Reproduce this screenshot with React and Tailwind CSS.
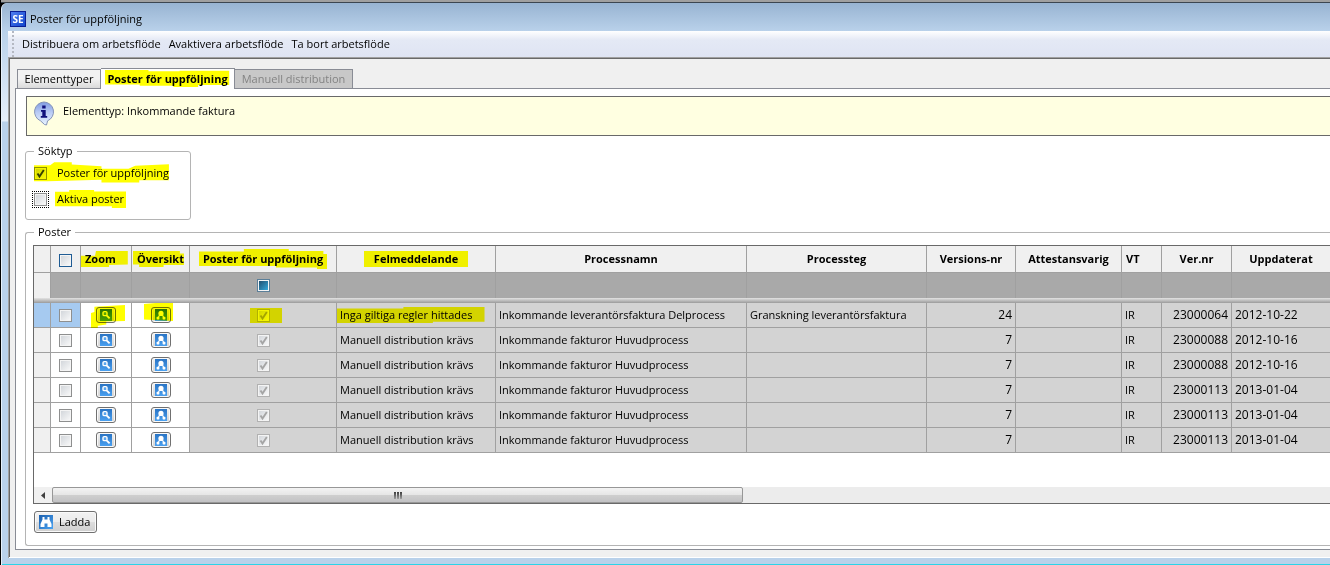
import React, { useState } from 'react';
import clsx from 'clsx';

const MENU = ['Distribuera om arbetsflöde', 'Avaktivera arbetsflöde', 'Ta bort arbetsflöde'];

const COLUMNS = [
  { key: 'head', width: 'w-[17px]' },
  { key: 'select', width: 'w-[30px]' },
  { key: 'zoom', label: 'Zoom', width: 'w-[51px]', align: 'text-left pl-1', mark: '-left-1 -right-3 inset-y-0', shape: '0,30 30,30 32,0 100,0 100,85 60,88 60,100 0,100' },
  { key: 'overview', label: 'Översikt', width: 'w-[58px]', align: 'text-center', mark: '-left-1 right-0 inset-y-0', shape: '0,0 92,0 92,15 100,15 100,88 60,88 60,100 12,100 12,85 0,85' },
  { key: 'followUp', label: 'Poster för uppföljning', width: 'w-[147px]', align: 'text-center', mark: '-inset-x-1 -inset-y-0.5', shape: '0,12 35,12 35,0 70,0 70,10 97,10 97,25 100,25 100,100 92,100 92,92 60,92 60,85 0,85' },
  { key: 'error', label: 'Felmeddelande', width: 'w-[159px]', align: 'text-center', mark: '-inset-x-2.5 inset-y-0', shape: '0,0 100,0 100,100 0,100' },
  { key: 'process', label: 'Processnamn', width: 'w-[251px]', align: 'text-center' },
  { key: 'step', label: 'Processteg', width: 'w-[180px]', align: 'text-center' },
  { key: 'version', label: 'Versions-nr', width: 'w-[89px]', align: 'text-center' },
  { key: 'attest', label: 'Attestansvarig', width: 'w-[106px]', align: 'text-center' },
  { key: 'vt', label: 'VT', width: 'w-[40px]', align: 'text-left pl-1' },
  { key: 'verNo', label: 'Ver.nr', width: 'w-[70px]', align: 'text-center' },
  { key: 'updated', label: 'Uppdaterat', width: 'w-[99px]', align: 'text-center' },
];

const MANUAL = 'Manuell distribution krävs';
const MAIN = 'Inkommande fakturor Huvudprocess';

const ROWS = [
  { error: 'Inga giltiga regler hittades', process: 'Inkommande leverantörsfaktura Delprocess', step: 'Granskning leverantörsfaktura', version: 24, verNo: '23000064', updated: '2012-10-22' },
  { error: MANUAL, process: MAIN, step: '', version: 7, verNo: '23000088', updated: '2012-10-16' },
  { error: MANUAL, process: MAIN, step: '', version: 7, verNo: '23000088', updated: '2012-10-16' },
  { error: MANUAL, process: MAIN, step: '', version: 7, verNo: '23000113', updated: '2013-01-04' },
  { error: MANUAL, process: MAIN, step: '', version: 7, verNo: '23000113', updated: '2013-01-04' },
  { error: MANUAL, process: MAIN, step: '', version: 7, verNo: '23000113', updated: '2013-01-04' },
];

// Highlighter pen stroke over its relative parent
function Marker({ className, shape = '0,0 100,0 100,100 0,100' }) {
  return (
    <span className={clsx('absolute pointer-events-none mix-blend-multiply', className)}>
      <svg viewBox="0 0 100 100" preserveAspectRatio="none" className="block w-full h-full">
        <polygon points={shape} fill="#ffff00" />
      </svg>
    </span>
  );
}

function CheckBox({ id, label, checked, onChange, disabled, tone = 'border-[#8e8f8f]' }) {
  return (
    <span className="relative inline-block w-[13px] h-[13px] align-middle">
      <input
        id={id}
        type="checkbox"
        aria-label={label}
        checked={checked}
        onChange={onChange}
        disabled={disabled}
        className={clsx(
          'block appearance-none w-[13px] h-[13px] border bg-linear-to-br from-[#cfd3d8] to-[#fbfbfb] shadow-[inset_0_0_0_1px_#f4f4f4]',
          tone
        )}
      />
      {checked && (
        <svg viewBox="0 0 13 13" className="absolute inset-0 w-[13px] h-[13px] pointer-events-none">
          <path d="M3.5 6.5 L5.5 9.5 L9.8 3" fill="none" stroke={disabled ? '#a5a5a5' : '#34406a'} strokeWidth="1.9" />
        </svg>
      )}
    </span>
  );
}

function RowButton({ label, children }) {
  return (
    <button
      type="button"
      aria-label={label}
      className="flex items-center justify-center w-5 h-4 mx-auto rounded-[3px] border border-[#707070] bg-linear-to-b from-[#f2f2f2] to-[#d2d2d2] shadow-[inset_0_0_0_1px_#fafafa]"
    >
      <span className="w-3 h-3 bg-linear-to-b from-[#2a74c4] to-[#4aa0f0]">
        <svg viewBox="0 0 12 12" className="block w-3 h-3">{children}</svg>
      </span>
    </button>
  );
}

const ZoomGlyph = () => (
  <>
    <rect x="3" y="2.6" width="4" height="4" rx="1.2" fill="#5aa5ee" stroke="#fff" strokeWidth="1.4" />
    <path d="M6.8 6.6 L9.6 9.4" stroke="#fff" strokeWidth="1.9" />
  </>
);

const OverviewGlyph = () => (
  <>
    <circle cx="6" cy="4.4" r="2.6" fill="#fff" />
    <path d="M4.6 6 L3 9 M7.4 6 L9 9" stroke="#fff" strokeWidth="1.2" />
    <rect x="1.6" y="7.8" width="2.8" height="2.6" rx="0.6" fill="#fff" />
    <rect x="7.6" y="7.8" width="2.8" height="2.6" rx="0.6" fill="#fff" />
  </>
);

function InfoIcon() {
  return (
    <svg viewBox="0 0 22 25" className="w-[22px] h-[25px] shrink-0">
      <defs>
        <linearGradient id="info" x1="0" y1="0" x2="0" y2="1">
          <stop offset="0" stopColor="#7f9ae0" />
          <stop offset="0.45" stopColor="#b9cbf5" />
          <stop offset="1" stopColor="#e8f4ff" />
        </linearGradient>
      </defs>
      <path d="M11 1 A9.8 9.8 0 0 1 14.6 19.8 L13.5 24 L11.5 23.5 L7.5 19.8 A9.8 9.8 0 0 1 11 1 Z" fill="url(#info)" stroke="#8594b8" />
      <path d="M9.2 4.6 h3.4 v3 h-3.4 z M8 9 h4.7 v6 h1.5 v1.7 H7.8 V15 h1.5 v-4.3 H8 z" fill="#10107c" />
    </svg>
  );
}

function GroupBox({ title, className, children }) {
  return (
    <fieldset className={clsx('min-w-0 border border-[#b4b4b4] rounded-[3px]', className)}>
      <legend className="ml-2 px-1 h-4 leading-4">{title}</legend>
      {children}
    </fieldset>
  );
}

function PosterTable() {
  const [selected, setSelected] = useState([]);
  const toggle = (i) => setSelected(prev => prev.includes(i) ? prev.filter(n => n !== i) : [...prev, i]);

  return (
    <table className="table-fixed w-[1297px] border-separate border-spacing-0">
      <thead>
        <tr className="h-[27px] bg-[#f0f0f0]">
          {COLUMNS.map(col => (
            <th key={col.key} className={clsx('p-0 border-r border-b border-[#a0a0a0] font-bold whitespace-nowrap', col.width, col.align)}>
              {col.key === 'select' && (
                <CheckBox
                  label="Markera alla"
                  tone="border-[#1f5c94]"
                  checked={selected.length === ROWS.length}
                  onChange={e => setSelected(e.target.checked ? ROWS.map((_, i) => i) : [])}
                />
              )}
              {col.label && (
                <span className="relative inline-block leading-4">
                  {col.label}
                  {col.mark && <Marker className={col.mark} shape={col.shape} />}
                </span>
              )}
            </th>
          ))}
        </tr>
        <tr className="h-[25px] bg-[#a9a9a9]">
          {COLUMNS.map(col => (
            <td key={col.key} className={clsx('p-0 border-r border-[#a0a0a0] text-center', col.key === 'head' && 'bg-[#f0f0f0]')}>
              {col.key === 'followUp' && (
                <input
                  type="checkbox"
                  aria-label="Filtrera poster för uppföljning"
                  className="block mx-auto appearance-none w-[13px] h-[13px] border border-[#5b7f99] bg-linear-to-br from-[#1d4766] to-[#35b3e8] shadow-[inset_0_0_0_1px_#f4f4f4]"
                />
              )}
            </td>
          ))}
        </tr>
        <tr className="h-[5px]">
          <td colSpan={COLUMNS.length} className="p-0 bg-linear-to-b from-[#e3e3e3] to-[#9b9b9b]" />
        </tr>
      </thead>
      <tbody>
        {ROWS.map((row, i) => {
          const first = i === 0;
          const cell = 'p-0 border-r border-b border-[#a0a0a0] whitespace-nowrap';
          const grey = 'bg-[#d3d3d3]';
          return (
            <tr key={i} className="h-[25px] leading-4">
              <td className={clsx(cell, first ? 'bg-[#a6caf0]' : 'bg-[#f0f0f0]')} />
              <td className={clsx(cell, 'text-center', first && 'bg-[#a6caf0]')}>
                <span className="flex justify-center">
                  <CheckBox label={`Markera rad ${i + 1}`} checked={selected.includes(i)} onChange={() => toggle(i)} />
                </span>
              </td>
              <td className={cell}>
                <div className="relative">
                  <RowButton label="Zoom"><ZoomGlyph /></RowButton>
                  {first && <Marker className="left-2.5 right-1.5 -top-0.5 h-[23px]" shape="10,8 100,0 100,70 45,72 45,85 20,90 20,100 0,100 0,35 10,30" />}
                </div>
              </td>
              <td className={cell}>
                <div className="relative">
                  <RowButton label="Översikt"><OverviewGlyph /></RowButton>
                  {first && <Marker className="left-3 right-4 -top-1 h-[18px]" shape="0,5 40,0 100,0 100,100 0,92" />}
                </div>
              </td>
              <td className={clsx(cell, grey, 'text-center')}>
                <span className="relative flex justify-center">
                  <CheckBox label="Poster för uppföljning" checked disabled tone="border-[#b1b1b1]" onChange={() => {}} />
                  {first && <Marker className="left-[60px] right-[54px] -inset-y-px" />}
                </span>
              </td>
              <td className={clsx(cell, grey, 'pl-[3px]')}>
                <span className="relative inline-block">
                  {row.error}
                  {first && <Marker className="-left-[3px] -right-3 inset-y-0" shape="0,10 45,10 45,0 100,0 100,92 65,92 65,100 0,100" />}
                </span>
              </td>
              <td className={clsx(cell, grey, 'pl-[3px]')}>{row.process}</td>
              <td className={clsx(cell, grey, 'pl-[3px]')}>{row.step}</td>
              <td className={clsx(cell, grey, 'pr-[3px] text-right text-[12px]')}>{row.version}</td>
              <td className={clsx(cell, grey)} />
              <td className={clsx(cell, grey, 'pl-[3px]')}>IR</td>
              <td className={clsx(cell, grey, 'pr-[3px] text-right text-[12px]')}>{row.verNo}</td>
              <td className={clsx(cell, grey, 'pl-[3px] text-[12px]')}>{row.updated}</td>
            </tr>
          );
        })}
      </tbody>
    </table>
  );
}

export default function App() {
  const [followUp, setFollowUp] = useState(true);
  const [active, setActive] = useState(false);

  return (
    <div className="min-h-screen flex flex-col bg-black pl-px overflow-hidden text-[11px] leading-4 text-black font-['Open_Sans','Segoe_UI',sans-serif]">
      <div className="h-0.5 bg-[#a0a0a0]" />
      <div className="h-px bg-[#3c4650]" />
      <div className="flex-1 flex flex-col rounded-tl-md bg-[#b9d1ea] border-l border-[#e6f0fa]">
        {/* Title bar */}
        <div className="flex items-center gap-1 h-7 pl-2 pt-1 rounded-tl-md bg-linear-to-b from-[#98b4d2] to-[#b9d1ea]">
          <span className="flex items-center justify-center w-4 h-4 border border-[#0a1e96] bg-linear-to-br from-[#4f7df0] to-[#1246cc] text-[10px] leading-none font-bold text-white">SE</span>
          <h1>Poster för uppföljning</h1>
        </div>

        <div className="flex-1 flex">
          <div className="w-1.5 shrink-0 bg-[linear-gradient(to_bottom,#b9d1ea_0px,#e6effa_90px,#b9d1ea_91px)]" />
          <div className="flex-1 min-w-0 flex flex-col">
            {/* Menu bar */}
            <nav className="flex items-center h-[26px] pl-1 bg-linear-to-b from-white from-0% via-[#e4e9f5] via-35% to-[#dfe4f3]">
              <span className="h-full w-0.5 bg-[repeating-linear-gradient(to_bottom,#b4b8c2_0px,#b4b8c2_2px,transparent_2px,transparent_4px)]" />
              <div className="flex gap-2 pl-2">
                {MENU.map(item => <button key={item} type="button">{item}</button>)}
              </div>
            </nav>

            <div className="flex-1 flex flex-col border-l border-[#a0a0a0] border-t">
              <div className="flex-1 flex flex-col border-l border-t border-[#696969] bg-[#f0f0f0] pl-[5px] pt-[9px] pb-[7px]">
                {/* Tabs */}
                <div role="tablist" className="relative flex items-end h-5 pl-0.5">
                  <button type="button" role="tab" aria-selected="false" className="h-[19px] w-[84px] border border-b-0 border-[#898c95] bg-linear-to-b from-[#f2f2f2] from-50% to-[#dadada]">
                    Elementtyper
                  </button>
                  <button type="button" role="tab" aria-selected="true" className="z-10 h-[21px] -mb-px w-[134px] border border-b-0 border-l-0 border-[#898c95] bg-white font-bold whitespace-nowrap">
                    <span className="relative">
                      Poster för uppföljning
                      <Marker className="-inset-x-0.5 -inset-y-px" shape="0,0 35,0 35,8 60,8 60,5 100,5 100,88 75,88 75,100 55,100 55,92 28,92 28,85 0,85" />
                    </span>
                  </button>
                  <button type="button" role="tab" disabled className="h-[19px] w-[118px] border border-b-0 border-l-0 border-[#898c95] bg-[#c8c8c8] text-[#838383]">
                    Manuell distribution
                  </button>
                </div>

                <div className="flex-1 border border-r-0 border-[#898c95] bg-white pl-[9px] pt-[7px] pb-[3px]">
                  <div className="flex gap-2 h-10 ml-px pl-1.5 pt-1 border border-r-0 border-[#696969] bg-[#ffffe1]">
                    <InfoIcon />
                    <p className="pt-0.5">Elementtyp: Inkommande faktura</p>
                  </div>

                  <GroupBox title="Söktyp" className="w-[166px] mt-[7px]">
                    <div className="flex flex-col items-start gap-2.5 pl-2 pt-1.5 pb-3">
                      <div className="relative flex items-center gap-2.5 h-4">
                        <CheckBox id="followUp" checked={followUp} onChange={e => setFollowUp(e.target.checked)} />
                        <label htmlFor="followUp">Poster för uppföljning</label>
                        <Marker className="inset-x-0 -inset-y-1" shape="0,18 12,18 15,5 28,5 28,15 50,22 50,32 70,32 75,20 100,14 100,80 78,80 78,90 50,90 50,78 10,84 0,84" />
                      </div>
                      <div className="flex items-center gap-2.5 h-4">
                        <span className="flex w-[13px] h-[13px] outline-1 outline-offset-1 outline-dotted outline-black">
                          <CheckBox id="active" checked={active} onChange={e => setActive(e.target.checked)} />
                        </span>
                        <span className="relative">
                          <label htmlFor="active">Aktiva poster</label>
                          <Marker className="-inset-x-0.5 -inset-y-px" shape="0,10 20,10 20,0 55,0 55,8 100,8 100,100 80,100 80,90 0,90" />
                        </span>
                      </div>
                    </div>
                  </GroupBox>

                  <GroupBox title="Poster" className="mt-1 border-r-0 rounded-r-none">
                    <div className="pt-[5px] pb-3 pl-[7px]">
                      <div className="border border-r-0 border-[#696969] overflow-hidden">
                        <PosterTable />
                        <div className="flex h-4 mt-[34px] bg-[#ececec]">
                          <button type="button" aria-label="Rulla åt vänster" className="flex items-center justify-center w-[18px] bg-[#f0f0f0]">
                            <svg viewBox="0 0 4 7" className="w-1 h-[7px]"><path d="M4 0 L0 3.5 L4 7 Z" fill="#404040" /></svg>
                          </button>
                          <div className="flex items-center justify-center gap-px w-8/15 border border-[#979797] rounded-[2px] bg-[linear-gradient(to_bottom,#f3f3f3_0%,#e6e6e6_48%,#cfcfcf_50%,#c2c2c4_100%)]">
                            <span className="w-0.5 h-[7px] bg-linear-to-b from-[#3c3c3c] to-[#a0a0a0]" />
                            <span className="w-0.5 h-[7px] bg-linear-to-b from-[#3c3c3c] to-[#a0a0a0]" />
                            <span className="w-0.5 h-[7px] bg-linear-to-b from-[#3c3c3c] to-[#a0a0a0]" />
                          </div>
                        </div>
                      </div>
                      <button type="button" className="flex items-center gap-1.5 h-[22px] mt-[7px] ml-px pl-1 pr-1.5 border border-[#707070] rounded-[3px] bg-[linear-gradient(to_bottom,#f2f2f2_0%,#ebebeb_50%,#dddddd_51%,#cfcfcf_100%)] shadow-[inset_0_0_0_1px_#fafafa]">
                        <span className="bg-linear-to-br from-[#1b5fae] to-[#4aa3f2]">
                          <svg viewBox="0 0 14 14" className="block w-3.5 h-3.5" fill="#fff">
                            <path d="M3.5 2 h2 v2.5 h3 V2 h2 v2.5 L12.5 9 v3 h-4 V8.5 h-3 V12 h-4 V9 L3.5 4.5 z" />
                          </svg>
                        </span>
                        Ladda
                      </button>
                    </div>
                  </GroupBox>
                </div>
              </div>
              <div className="h-px bg-white" />
            </div>
          </div>
        </div>
        <div className="h-1.5" />
        <div className="h-px bg-[#2bd4e8]" />
      </div>
    </div>
  );
}
